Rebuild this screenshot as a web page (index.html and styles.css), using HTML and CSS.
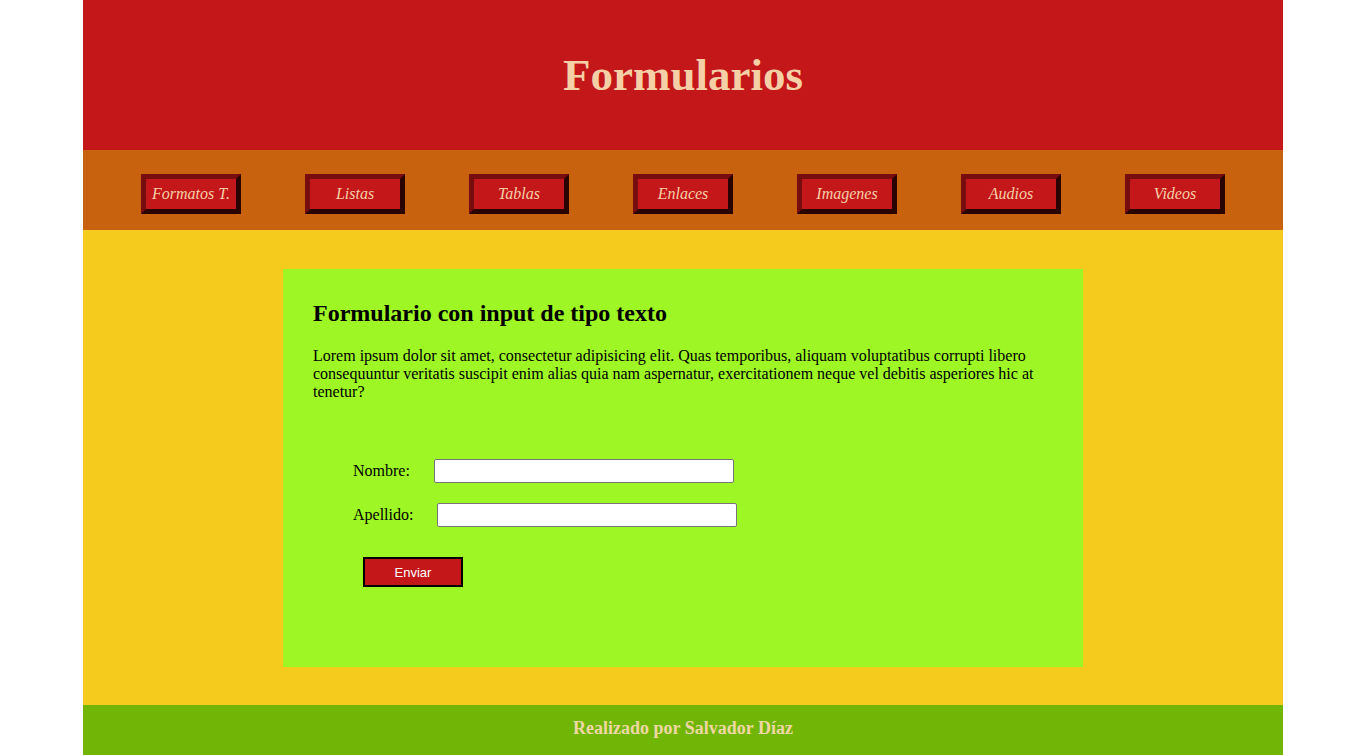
FILE: index.html
```html
<!DOCTYPE html>
<html lang="es">
<head>
<meta charset="utf-8">
<title>Formularios</title>
<link rel="stylesheet" href="styles.css">
</head>
<body>
<div class="page">
  <header class="header">
    <h1 class="title">Formularios</h1>
  </header>
  <nav class="nav">
    <a class="nav-btn" href="#">Formatos T.</a>
    <a class="nav-btn" href="#">Listas</a>
    <a class="nav-btn" href="#">Tablas</a>
    <a class="nav-btn" href="#">Enlaces</a>
    <a class="nav-btn" href="#">Imagenes</a>
    <a class="nav-btn" href="#">Audios</a>
    <a class="nav-btn" href="#">Videos</a>
  </nav>
  <main class="main">
    <section class="card">
      <h2 class="card-title">Formulario con input de tipo texto</h2>
      <p class="card-text">Lorem ipsum dolor sit amet, consectetur adipisicing elit. Quas temporibus, aliquam voluptatibus corrupti libero consequuntur veritatis suscipit enim alias quia nam aspernatur, exercitationem neque vel debitis asperiores hic at tenetur?</p>
      <form class="form">
        <div class="row"><label class="lbl" for="n">Nombre:</label> <input class="inp" id="n" type="text"></div>
        <div class="row"><label class="lbl" for="a">Apellido:</label> <input class="inp" id="a" type="text"></div>
        <button class="send" type="button">Enviar</button>
      </form>
    </section>
  </main>
  <footer class="footer">Realizado por Salvador Díaz</footer>
</div>
</body>
</html>
```

FILE: styles.css
```css
html, body {
  margin: 0;
  padding: 0;
  background: #ffffff;
  font-family: "Liberation Serif", "Times New Roman", serif;
}
.page {
  width: 1200px;
  margin: 0 auto;
}
.header {
  height: 150px;
  background: #c4171a;
  display: flex;
  align-items: center;
  justify-content: center;
}
.title {
  margin: 0;
  font-size: 45px;
  font-weight: bold;
  color: #f5cfa6;
}
.nav {
  height: 80px;
  background: #c9620e;
  display: flex;
  align-items: flex-start;
  padding: 24px 58px 0;
  gap: 64px;
  box-sizing: border-box;
}
.nav-btn {
  width: 100px;
  height: 40px;
  box-sizing: border-box;
  background: #c4171a;
  border-style: solid;
  border-width: 5px;
  border-color: #780d10 #2a0303 #2a0303 #780d10;
  color: #f5cfa6;
  font-style: italic;
  font-size: 16px;
  text-decoration: none;
  display: flex;
  align-items: center;
  justify-content: center;
}
.main {
  background: #f5cb1d;
  padding: 39px 0 38px;
}
.card {
  width: 800px;
  height: 398px;
  margin: 0 auto;
  background: #9ef725;
  padding: 30px 30px 0;
  box-sizing: border-box;
}
.card-title {
  margin: 0 0 20px;
  font-size: 24px;
  font-weight: bold;
  color: #000;
  line-height: 28px;
}
.card-text {
  margin: 0;
  font-size: 16px;
  line-height: 18px;
  color: #000;
}
.form {
  padding: 58px 0 0 40px;
}
.row {
  display: flex;
  align-items: center;
  height: 24px;
  margin-bottom: 20px;
  font-size: 16px;
}
.lbl {
  margin-right: 24px;
}
.inp {
  width: 300px;
  height: 24px;
  box-sizing: border-box;
  border: 1px solid #767676;
  border-radius: 2px;
  background: #fff;
  margin: 0;
}
.send {
  margin: 10px 0 0 10px;
  width: 100px;
  height: 30px;
  background: #c4171a;
  border: 2px solid #000;
  color: #fff;
  font-family: "Liberation Sans", Arial, sans-serif;
  font-size: 13px;
  padding: 0;
}
.footer {
  height: 50px;
  box-sizing: border-box;
  padding-bottom: 4px;
  background: #71b607;
  color: #efd8a3;
  font-weight: bold;
  font-size: 18px;
  display: flex;
  align-items: center;
  justify-content: center;
}
```
